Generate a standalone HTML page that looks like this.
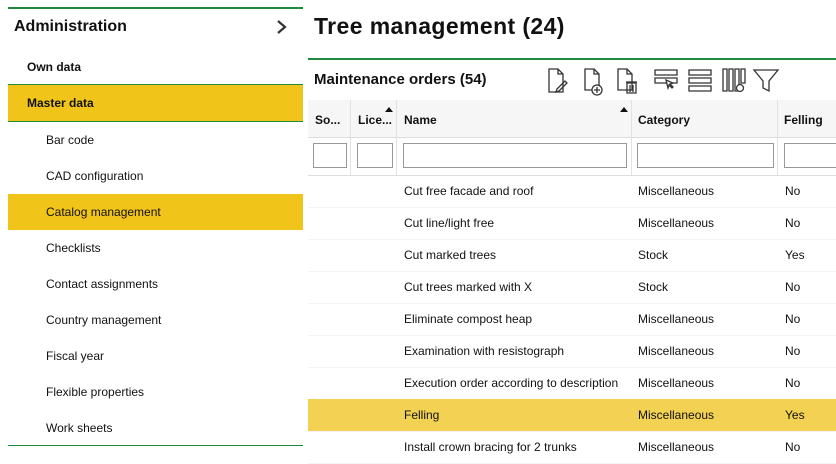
<!DOCTYPE html><html><head><style>
body{margin:0;width:836px;height:460px;overflow:hidden;background:#fff;font-family:"Liberation Sans",sans-serif;color:#111;position:relative}
.a{position:absolute}
.side{left:8px;top:7px;width:295px;border-top:2px solid #1e8a3c}
.si{position:absolute;left:0;width:295px;height:36px;line-height:36px;font-size:12px}
.row{position:absolute;left:308px;width:528px;height:32px;line-height:32px;font-size:12px;border-bottom:1px solid #f3f3f3}
.row span{position:absolute}
.inp{position:absolute;top:143px;height:25px;border:1px solid #999;box-sizing:border-box;background:#fff}
</style></head><body>
<div class="a side"></div>
<div class="a" style="left:14px;top:18px;font-size:16px;font-weight:bold">Administration</div>
<svg class="a" style="left:276px;top:19px" width="12" height="16"><path d="M2 2 L9 8 L2 14" stroke="#333" stroke-width="2.2" fill="none"/></svg>
<div class="si" style="left:8px;top:49px;font-weight:bold;padding-left:19px;box-sizing:border-box">Own data</div>
<div class="si" style="left:8px;top:84px;background:#f0c419;border-top:1px solid #1e8a3c;border-bottom:1px solid #1e8a3c;font-weight:bold;padding-left:19px;box-sizing:border-box;height:38px;line-height:36px">Master data</div>
<div class="si" style="left:8px;top:122px;padding-left:38px;box-sizing:border-box">Bar code</div>
<div class="si" style="left:8px;top:158px;padding-left:38px;box-sizing:border-box">CAD configuration</div>
<div class="si" style="left:8px;top:194px;padding-left:38px;box-sizing:border-box;background:#f0c419">Catalog management</div>
<div class="si" style="left:8px;top:230px;padding-left:38px;box-sizing:border-box">Checklists</div>
<div class="si" style="left:8px;top:266px;padding-left:38px;box-sizing:border-box">Contact assignments</div>
<div class="si" style="left:8px;top:302px;padding-left:38px;box-sizing:border-box">Country management</div>
<div class="si" style="left:8px;top:338px;padding-left:38px;box-sizing:border-box">Fiscal year</div>
<div class="si" style="left:8px;top:374px;padding-left:38px;box-sizing:border-box">Flexible properties</div>
<div class="si" style="left:8px;top:410px;padding-left:38px;box-sizing:border-box">Work sheets</div>
<div class="a" style="left:8px;top:445px;width:295px;border-top:1px solid #1e8a3c"></div>

<div class="a" style="left:314px;top:13px;font-size:23px;font-weight:bold;letter-spacing:0.4px">Tree management (24)</div>
<div class="a" style="left:308px;top:58px;width:528px;border-top:2px solid #1e8a3c"></div>
<div class="a" style="left:314px;top:71px;font-size:15px;font-weight:bold">Maintenance orders (54)</div>
<svg class="a" style="left:545px;top:67px" width="240" height="30" fill="none" stroke="#333" stroke-width="1.3">
<path d="M4 2h9l5 5v18H4z M13 2v5h5"/><path d="M12 22l8-8 2 2-8 8-3 1z"/>
<path d="M40 2h9l5 5v16H40z M49 2v5h5"/><circle cx="52" cy="23" r="5" fill="#fff"/><path d="M52 20v6M49 23h6"/>
<path d="M73 2h9l5 5v16H73z M82 2v5h5"/><path d="M82 16h9v10h-9z M81 15h11M85 18v7M88 18v7"/>
<path d="M110 3h22v5h-22z M110 11h22v5h-22z"/><path d="M121 13l7 3-3 1 3 3-1 1-3-3-1 3z" fill="#fff"/>
<path d="M144 3h22v5h-22z M144 11h22v5h-22z M144 19h22v5h-22z"/>
<path d="M178 2h4v22h-4z M184 2h4v22h-4z M190 2h4v22h-4z M196 2h4v14h-4z"/><circle cx="195" cy="21" r="3.5" fill="#fff"/>
<path d="M209 3h24l-9 11v10l-6-3v-7z"/>
</svg>
<div class="a" style="left:308px;top:100px;width:528px;height:37px;background:#f6f6f6;border-bottom:1px solid #ddd"></div>
<div class="a" style="left:308px;top:137px;width:528px;height:38px;border-bottom:1px solid #ddd"></div>
<div class="a" style="left:350px;top:100px;height:75px;border-left:1px solid #e2e2e2"></div>
<div class="a" style="left:396px;top:100px;height:75px;border-left:1px solid #e2e2e2"></div>
<div class="a" style="left:631px;top:100px;height:75px;border-left:1px solid #e2e2e2"></div>
<div class="a" style="left:777px;top:100px;height:75px;border-left:1px solid #e2e2e2"></div>
<div class="a" style="top:113px;left:315px;font-size:12px;font-weight:bold">So...</div>
<div class="a" style="top:113px;left:358px;font-size:12px;font-weight:bold">Lice...</div>
<div class="a" style="top:113px;left:404px;font-size:12px;font-weight:bold">Name</div>
<div class="a" style="top:113px;left:638px;font-size:12px;font-weight:bold">Category</div>
<div class="a" style="top:113px;left:784px;font-size:12px;font-weight:bold">Felling</div>
<svg class="a" style="left:385px;top:107px" width="8" height="5"><path d="M0 5L4 0L8 5z" fill="#111"/></svg>
<svg class="a" style="left:620px;top:107px" width="8" height="5"><path d="M0 5L4 0L8 5z" fill="#111"/></svg>
<div class="inp" style="left:313px;width:34px"></div>
<div class="inp" style="left:357px;width:36px"></div>
<div class="inp" style="left:403px;width:224px"></div>
<div class="inp" style="left:637px;width:137px"></div>
<div class="inp" style="left:784px;width:60px"></div>

<div class="row" style="top:175px"><span style="left:96px">Cut free facade and roof</span><span style="left:330px">Miscellaneous</span><span style="left:477px">No</span></div>
<div class="row" style="top:207px"><span style="left:96px">Cut line/light free</span><span style="left:330px">Miscellaneous</span><span style="left:477px">No</span></div>
<div class="row" style="top:239px"><span style="left:96px">Cut marked trees</span><span style="left:330px">Stock</span><span style="left:477px">Yes</span></div>
<div class="row" style="top:271px"><span style="left:96px">Cut trees marked with X</span><span style="left:330px">Stock</span><span style="left:477px">No</span></div>
<div class="row" style="top:303px"><span style="left:96px">Eliminate compost heap</span><span style="left:330px">Miscellaneous</span><span style="left:477px">No</span></div>
<div class="row" style="top:335px"><span style="left:96px">Examination with resistograph</span><span style="left:330px">Miscellaneous</span><span style="left:477px">No</span></div>
<div class="row" style="top:367px"><span style="left:96px">Execution order according to description</span><span style="left:330px">Miscellaneous</span><span style="left:477px">No</span></div>
<div class="row" style="top:399px;background:#f2d153"><span style="left:96px">Felling</span><span style="left:330px">Miscellaneous</span><span style="left:477px">Yes</span></div>
<div class="row" style="top:431px"><span style="left:96px">Install crown bracing for 2 trunks</span><span style="left:330px">Miscellaneous</span><span style="left:477px">No</span></div>
</body></html>
